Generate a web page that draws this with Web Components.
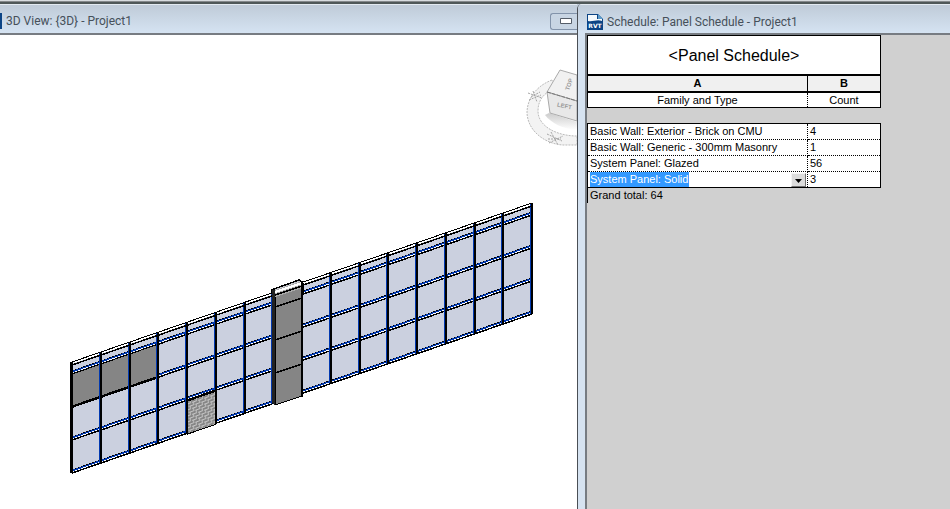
<!DOCTYPE html>
<html lang="en">
<head>
<meta charset="utf-8">
<title>Project1</title>
<style>
  html, body { height: 100%; margin: 0; }
  body { font: 11px/15px "Liberation Sans", Arial, sans-serif; color: #000; overflow: hidden; }
</style>
</head>
<body>
<revit-workspace>
  <model-window slot="model" heading="3D View: {3D} - Project1">
    <curtain-wall-view></curtain-wall-view>
  </model-window>
  <schedule-window slot="schedule" heading="Schedule: Panel Schedule - Project1">
    <panel-schedule></panel-schedule>
  </schedule-window>
</revit-workspace>

<script>
function makeTemplate(html) {
  const template = document.createElement('template');
  template.innerHTML = html;
  return template;
}

class BaseElement extends HTMLElement {
  constructor() {
    super();
    this.attachShadow({ mode: 'open' });
    this.shadowRoot.appendChild(this.constructor.template.content.cloneNode(true));
  }
}

class RevitWorkspace extends BaseElement {
  static template = makeTemplate(`
    <style>
      :host {
        display: grid;
        grid-template-columns: 577fr 373fr;
        grid-template-rows: minmax(0, 1fr);
        box-sizing: border-box;
        height: 100vh;
        padding-top: 4px;
        background: linear-gradient(#d8dcdf 1px, #85898b 1px, #85898b 2px, #4f5858 2px, #4f5858 4px, #bfcbd8 4px);
      }
      ::slotted(*) { min-width: 0; }
    </style>
    <slot name="model"></slot>
    <slot name="schedule"></slot>
  `);
}
customElements.define('revit-workspace', RevitWorkspace);

class FileIcon extends BaseElement {
  static template = makeTemplate(`
    <style>
      :host { display: block; flex: none; width: 16px; height: 16px; }
      .icon { display: grid; align-items: end; justify-items: center; height: 16px; }
      svg, .label { grid-area: 1 / 1; }
      .label { color: #fff; font: bold 6px/8px "DejaVu Sans", sans-serif; }
    </style>
    <div class="icon">
      <svg width="16" height="16" viewBox="0 0 16 16" aria-hidden="true">
        <path d="M0 0H11L16 5V16H0Z" fill="#0c4485"/>
        <path d="M1 1H10V5H15V7C10 5 6 8 1 7Z" fill="#f5f9fc"/>
        <path d="M11 0L16 5H11Z" fill="#5d9bc9"/>
      </svg>
      <span class="label">RVT</span>
    </div>
  `);
}
customElements.define('file-icon', FileIcon);

class ModelWindow extends BaseElement {
  static template = makeTemplate(`
    <style>
      :host { display: flex; flex-direction: column; background: #fff; overflow: hidden; }
      header {
        display: flex;
        align-items: center;
        flex: none;
        box-sizing: border-box;
        height: 31px;
        padding-top: 4px;
        border-top: 1px solid #e3eaf1;
        border-bottom: 2px solid #777c82;
        background: linear-gradient(#bfcbd8, #d5e3f2);
      }
      .edge { width: 2px; height: 16px; margin-right: 4px; background: #0c4485; }
      h1 { flex: 1; margin: 0; color: #46505a; font: 12px/16px Roboto, "Noto Sans", sans-serif; white-space: nowrap; }
      button {
        display: flex;
        align-items: center;
        justify-content: center;
        width: 27px;
        height: 17px;
        padding: 0 0 0 4px;
        border: 1px solid #8293aa;
        border-right: 0;
        border-radius: 3px 0 0 3px;
        background: #c8d5e3;
      }
      button svg { flex: none; }
      main { flex: 1; min-height: 0; }
    </style>
    <header>
      <span class="edge"></span>
      <h1></h1>
      <button aria-label="Minimize">
        <svg width="12" height="6" viewBox="0 0 12 6"><rect width="12" height="6" rx="1" fill="#555d68"/><path d="M1 1H11V5H1Z" fill="#fff"/></svg>
      </button>
    </header>
    <main><slot></slot></main>
  `);

  connectedCallback() {
    this.shadowRoot.querySelector('h1').textContent = this.getAttribute('heading');
  }
}
customElements.define('model-window', ModelWindow);

class ScheduleWindow extends BaseElement {
  static template = makeTemplate(`
    <style>
      :host {
        display: flex;
        flex-direction: column;
        padding-left: 7px;
        border-left: 1px solid #4a4f55;
        border-top-left-radius: 5px;
        background: #d6e3f1;
        overflow: hidden;
      }
      header {
        display: flex;
        align-items: center;
        flex: none;
        gap: 4px;
        box-sizing: border-box;
        height: 29px;
        margin-left: -7px;
        padding: 5px 0 0 9px;
        border-top: 1px solid #e3eaf1;
        background: linear-gradient(#bfcbd8, #d5e3f2);
      }
      h1 { margin: 0; color: #46505a; font: 12px/16px Roboto, "Noto Sans", sans-serif; white-space: nowrap; }
      main {
        flex: 1;
        min-height: 0;
        border-top: 2px solid #777c82;
        border-left: 2px solid #777c82;
        background: #d0d0d0;
      }
    </style>
    <header><file-icon></file-icon><h1></h1></header>
    <main><slot></slot></main>
  `);

  connectedCallback() {
    this.shadowRoot.querySelector('h1').textContent = this.getAttribute('heading');
  }
}
customElements.define('schedule-window', ScheduleWindow);

class TypePicker extends BaseElement {
  static template = makeTemplate(`
    <style>
      :host { display: block; }
      label { display: grid; align-items: center; height: 15px; }
      select, .arrow { grid-area: 1 / 1; }
      select {
        appearance: none;
        width: 100%;
        height: 15px;
        margin: 0;
        padding: 0;
        border: 0;
        border-radius: 0;
        outline: 0;
        background: linear-gradient(#3399ff, #3399ff) 0 0 / 99px 100% no-repeat;
        color: #fff;
        font: inherit;
      }
      .arrow {
        display: flex;
        align-items: center;
        justify-content: center;
        justify-self: end;
        box-sizing: border-box;
        width: 15px;
        height: 14px;
        padding-top: 3px;
        border: 1px solid;
        border-color: #f4f4f4 #707070 #707070 #f4f4f4;
        background: #dcdcdc;
        pointer-events: none;
      }
    </style>
    <label>
      <select aria-label="Family and Type">
        <option>System Panel: Solid</option>
        <option>System Panel: Glazed</option>
      </select>
      <span class="arrow"><svg width="7" height="4" viewBox="0 0 7 4"><path d="M0 0H7L3.5 4Z"/></svg></span>
    </label>
  `);
}
customElements.define('type-picker', TypePicker);

class PanelSchedule extends BaseElement {
  static template = makeTemplate(`
    <style>
      :host { display: block; }
      table {
        width: 294px;
        max-width: 100%;
        border-collapse: collapse;
        table-layout: fixed;
      }
      .count { width: 73px; }
      th, td { height: 15px; padding: 0 2px; line-height: 15px; white-space: nowrap; font-weight: normal; text-align: left; }
      caption {
        box-sizing: border-box;
        height: 40px;
        border: 1px solid #000;
        background: #fff;
        font-size: 16px;
        line-height: 39px;
      }
      .letters th { height: 15px; border: 1px solid #000; border-bottom-width: 2px; background: #f0f0f0; font-weight: bold; text-align: center; }
      .names th { height: 14px; line-height: 14px; border: 1px solid #000; background: #fff; text-align: center; }
      .names th + th, .rows td + td { border-left: 1px dotted #000; }
      .names th:first-child, .rows td:first-child { border-right: 1px dotted #000; }
      .rows td { border: 1px solid #000; border-top: 1px dotted #000; border-bottom: 1px dotted #000; background: #fff; }
      .rows tr:first-child td { border-top: 1px solid #000; }
      .rows tr:last-child td { border-bottom: 1px solid #000; }
      .rows td:has(type-picker) { padding-right: 1px; }
      tfoot td { border-left: 1px solid #000; }
    </style>
    <table>
      <caption>&lt;Panel Schedule&gt;</caption>
      <colgroup><col><col class="count"></colgroup>
      <thead>
        <tr class="letters"><th>A</th><th>B</th></tr>
        <tr class="names"><th>Family and Type</th><th>Count</th></tr>
        <tr class="gap"><td colspan="2"></td></tr>
      </thead>
      <tbody class="rows">
        <tr><td>Basic Wall: Exterior - Brick on CMU</td><td>4</td></tr>
        <tr><td>Basic Wall: Generic - 300mm Masonry</td><td>1</td></tr>
        <tr><td>System Panel: Glazed</td><td>56</td></tr>
        <tr><td><type-picker></type-picker></td><td>3</td></tr>
      </tbody>
      <tfoot><tr><td colspan="2">Grand total: 64</td></tr></tfoot>
    </table>
  `);
}
customElements.define('panel-schedule', PanelSchedule);

// Wall geometry in drawing units
const LEFT = 72;
const RIGHT = 532;
const BAYS = 16;
const SLOPE = 159 / 460;
const RAILS = [374, 407, 440, 473];

const drop = (y, x) => y - (x - LEFT) * SLOPE;
const sloped = (x1, x2, y, color, width = 1) =>
  `<path d="M${x1} ${drop(y, x1)}L${x2} ${drop(y, x2)}" stroke="${color}" stroke-width="${width}" fill="none"/>`;
const quad = (x1, x2, top, bottom, fill, stroke = 'none') =>
  `<path d="M${x1} ${drop(top, x1)}L${x2} ${drop(top, x2)}V${drop(bottom, x2)}L${x1} ${drop(bottom, x1)}Z" fill="${fill}" stroke="${stroke}"/>`;

function drawWall() {
  const bay = (RIGHT - LEFT) / BAYS;
  let out = quad(LEFT, RIGHT, 364, 473, '#cbd0df');
  out += quad(LEFT, RIGHT, 362, 364, '#fff');

  for (const y of RAILS) {
    out += sloped(LEFT, RIGHT, y - 3, '#000');
    out += sloped(LEFT, RIGHT, y - 2, '#0038b0', 2);
    out += sloped(LEFT, RIGHT, y - 1, '#fff', 1);
    out += sloped(LEFT, RIGHT, y, '#000', 1.5);
  }
  // solid panels
  out += quad(LEFT, LEFT + bay * 3, 374, 406, '#858585', '#000');
  out += sloped(LEFT, LEFT + bay * 3, 407, '#000', 2);

  for (let i = 0; i <= BAYS; i++) {
    const x = Math.round(LEFT + bay * i);
    const top = drop(362, x);
    const height = 111;
    out += `<rect x="${x - 2}" y="${top}" width="2" height="${height}" fill="${i ? '#0038b0' : '#000'}"/>`;
    out += `<rect x="${x - 1}" y="${top}" width="2" height="${height}" fill="#000"/>`;
  }
  out += sloped(LEFT, RIGHT, 362, '#000');
  out += sloped(LEFT, RIGHT, 365, '#000', 1.5);

  // masonry infill
  out += quad(187, 215, 441, 474, 'url(#brick)', '#000');
  out += sloped(187, 215, 440, '#000', 2);
  return out;
}

class CurtainWallView extends BaseElement {
  static template = makeTemplate(`
    <style>
      :host { display: block; height: 100%; background: #fff; }
      svg { display: block; width: 100%; height: 100%; }
      .cube { font: bold 6px "Liberation Sans", sans-serif; fill: #999; text-anchor: middle; }
    </style>
    <svg viewBox="0 35 577 474" preserveAspectRatio="xMinYMin meet" role="img" aria-label="Curtain wall model">
      <defs>
        <pattern id="brick" width="6" height="6" patternUnits="userSpaceOnUse" patternTransform="skewY(-19)">
          <rect width="6" height="6" fill="#858585"/>
          <path d="M0 .5H5M3 3.5H6M0 3.5H2M1.5 0V3M4.5 3V6" stroke="#c4c4c4"/>
        </pattern>
        <linearGradient id="shade" x2="0" y2="1">
          <stop stop-color="#ccc"/>
          <stop offset="1" stop-color="#fff"/>
        </linearGradient>
      </defs>
      <g class="nav">
        <path d="M552 80C536 86 527 99 527 113C528 132 546 144 563 145H577V136C558 136 538 127 538 111C538 99 545 92 556 88Z" fill="#f3f3f3" stroke="#bbb" stroke-dasharray="2 1"/>
        <path d="M549 113L577 122V130C563 129 551 123 545 115Z" fill="url(#shade)"/>
        <path d="M560 70L577 75V101L547 92Z" fill="#f1f1f1" stroke="#aaa"/>
        <path d="M547 92L577 101V121L550 113Z" fill="#e8e8e8" stroke="#aaa"/>
        <path d="M547 92L577 101" stroke="#777" stroke-dasharray="4 1"/>
        <path d="M528 93L542 98M531 97L540 92M529 100L541 95M533 91L537 102M547 134L562 141M549 143L563 136M551 132L558 145M548 139H561" fill="none" stroke="#a5a5a5" stroke-dasharray="2 1"/>
        <text class="cube" transform="translate(571 85) rotate(-72)">TOP</text>
        <text class="cube" transform="translate(564 108) rotate(12)">LEFT</text>
      </g>
      <g class="wall" shape-rendering="crispEdges"></g>
      <g class="pier" shape-rendering="crispEdges">
        <path d="M271 290L299 280L303 283V293L275 302Z" fill="#c8cad0" stroke="#000"/>
        <path d="M275 294L302 285V396L275 405Z" fill="#858585" stroke="#000"/>
        <path d="M275 290L302 281V288L275 297Z" fill="#aaa"/>
        <path d="M272 293L302 283" stroke="#fff" stroke-width="2"/>
        <path d="M271 290L299 280L302 282V397M275 295L302 286M275 307L302 298M275 340L302 331M275 373L302 364" fill="none" stroke="#000" stroke-width="1.5"/>
        <path d="M272 290H275V405L272 403Z" fill="#222"/>
      </g>
    </svg>
  `);

  constructor() {
    super();
    this.shadowRoot.querySelector('.wall').innerHTML = drawWall();
  }
}
customElements.define('curtain-wall-view', CurtainWallView);
</script>
</body>
</html>
